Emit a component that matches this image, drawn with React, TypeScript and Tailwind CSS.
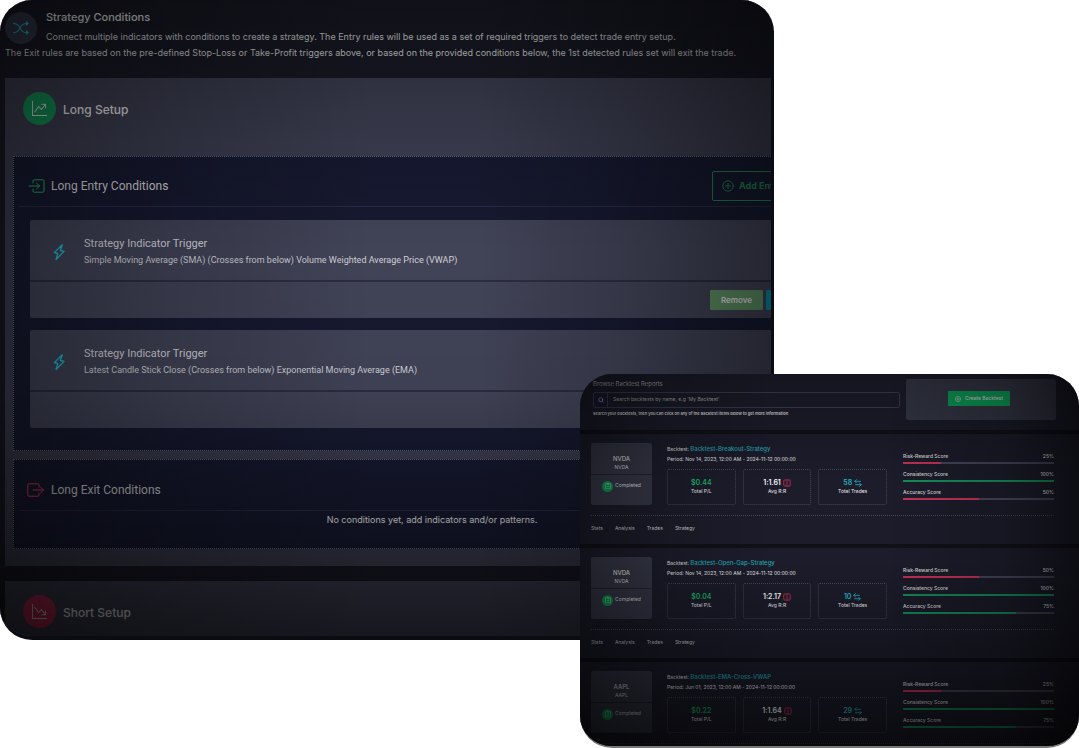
import React from 'react';
import { BsGraphUpArrow, BsGraphDownArrow, BsShuffle, BsClipboardCheck } from 'react-icons/bs';
import { Search } from 'lucide-react';

interface Trigger {
  text: string;
  editable: boolean;
}

interface Score {
  label: string;
  value: number;
}

interface Report {
  ticker: string;
  name: string;
  period: string;
  profit: string;
  ratio: string;
  trades: number;
  tabs: string[];
  scores: Score[];
}

const triggers: Trigger[] = [
  { text: 'Simple Moving Average (SMA) (Crosses from below) Volume Weighted Average Price (VWAP)', editable: true },
  { text: 'Latest Candle Stick Close (Crosses from below) Exponential Moving Average (EMA)', editable: false },
];

const tabs = ['Stats', 'Analysis', 'Trades', 'Strategy'];

const reports: Report[] = [
  {
    ticker: 'NVDA',
    name: 'Backtest-Breakout-Strategy',
    period: 'Nov 14, 2023, 12:00 AM - 2024-11-12 00:00:00',
    profit: '$0.44',
    ratio: '1:1.61',
    trades: 58,
    tabs,
    scores: [
      { label: 'Risk-Reward Score', value: 25 },
      { label: 'Consistency Score', value: 100 },
      { label: 'Accuracy Score', value: 50 },
    ],
  },
  {
    ticker: 'NVDA',
    name: 'Backtest-Open-Gap-Strategy',
    period: 'Nov 14, 2023, 12:00 AM - 2024-11-12 00:00:00',
    profit: '$0.04',
    ratio: '1:2.17',
    trades: 10,
    tabs,
    scores: [
      { label: 'Risk-Reward Score', value: 50 },
      { label: 'Consistency Score', value: 100 },
      { label: 'Accuracy Score', value: 75 },
    ],
  },
  {
    ticker: 'AAPL',
    name: 'Backtest-EMA-Cross-VWAP',
    period: 'Jun 01, 2023, 12:00 AM - 2024-11-12 00:00:00',
    profit: '$0.22',
    ratio: '1:1.64',
    trades: 29,
    tabs: [],
    scores: [
      { label: 'Risk-Reward Score', value: 25 },
      { label: 'Consistency Score', value: 100 },
      { label: 'Accuracy Score', value: 75 },
    ],
  },
];

const iconProps = {
  fill: 'none',
  stroke: 'currentColor',
  strokeLinecap: 'round' as const,
  strokeLinejoin: 'round' as const,
  'aria-hidden': true,
};

const EnterIcon = () => (
  <svg viewBox="0 0 18 14" className="h-[14px] w-[18px] text-[#2bb56c]" {...iconProps}>
    <path d="M5 4V2a1.2 1.2 0 0 1 1.2-1.2h8.6A1.2 1.2 0 0 1 16 2v10a1.2 1.2 0 0 1-1.2 1.2H6.2A1.2 1.2 0 0 1 5 12v-2M1 7h10.5M8.5 4l3 3-3 3" />
  </svg>
);

const ExitIcon = () => (
  <svg viewBox="0 0 18 14" className="h-[14px] w-[18px] text-[#f03a66]" {...iconProps}>
    <path d="M12 4V2A1.2 1.2 0 0 0 10.8.8H2A1.2 1.2 0 0 0 .8 2v10A1.2 1.2 0 0 0 2 13.2h8.8A1.2 1.2 0 0 0 12 12v-2M6 7h10.5M13.5 4l3 3-3 3" />
  </svg>
);

const BoltIcon = () => (
  <svg viewBox="0 0 12 18" className="mt-1 h-[18px] w-3 text-[#22c6dc]" strokeWidth="1.3" {...iconProps}>
    <path d="M9.3 1.8 1.2 9.6l3.6.9L3 16.5l8-8.1-3.6-.9z" />
  </svg>
);

const PlusCircle = ({ className }: { className: string }) => (
  <svg viewBox="0 0 12 12" className={className} {...iconProps}>
    <circle cx="6" cy="6" r="5.2" />
    <path d="M6 3.5v5M3.5 6h5" />
  </svg>
);

const RatioIcon = () => (
  <svg viewBox="0 0 8 8" className="size-2 text-[#d8325c]" strokeWidth="0.8" {...iconProps}>
    <path d="M3 1H1.6a.8.8 0 0 0-.8.8v4.4c0 .5.3.8.8.8H3M5 1h1.4c.5 0 .8.3.8.8v4.4c0 .5-.3.8-.8.8H5M4 .3v7.4" />
  </svg>
);

const TradesIcon = () => (
  <svg viewBox="0 0 8 8" className="size-2 text-[#22b3c6]" strokeWidth="0.8" {...iconProps}>
    <path d="M2.5.6.8 2.3 2.5 4M.8 2.3h5.7M5.5 4l1.7 1.7-1.7 1.7M7.2 5.7H1.5" />
  </svg>
);

const TriggerCard = ({ text, editable }: Trigger) => (
  <article className="rounded-[2px] bg-[#43455a]">
    <div className="flex h-[60px] items-center gap-[19px] pl-[23px]">
      <BoltIcon />
      <div className="pt-1 font-['Roboto','Inter',sans-serif]">
        <h4 className="text-[11px] leading-4 text-[#dcdce0]">Strategy Indicator Trigger</h4>
        <p className="text-[9px] leading-4 text-[#d8d8de]">{text}</p>
      </div>
    </div>
    <div className="flex h-[38px] items-center justify-end gap-[3px] border-t-2 border-[#2d2e42] pr-[26px]">
      {editable && (
        <>
          <button className="h-5 w-[53px] rounded-[1px] bg-[#649a6c] text-[8px] font-semibold text-[#eee]">Remove</button>
          <button aria-label="Edit" className="h-5 w-[53px] rounded-[1px] bg-[#0795ae]" />
        </>
      )}
    </div>
  </article>
);

const StrategyPanel = () => (
  <section className="relative col-span-2 col-start-1 row-start-1 self-start overflow-hidden rounded-[32px] border-r-[3px] border-b-4 border-[#0b0b12] bg-[#191a26] pl-[5px]">
    <header className="h-[78px] pt-[9px]">
      <div className="float-left mt-[3px] mr-[9px] flex size-8 items-center justify-center rounded-full bg-[#363a4e]">
        <BsShuffle className="size-4 text-[#28bfd3]" />
      </div>
      <h2 className="mb-1 text-[11px] leading-4 font-medium text-[#eee]">Strategy Conditions</h2>
      <p className="text-[9px] leading-4 whitespace-nowrap text-[#ddd]">
        Connect multiple indicators with conditions to create a strategy. The Entry rules will be used as a set of required triggers to detect trade entry setup.
        <br />
        The Exit rules are based on the pre-defined Stop-Loss or Take-Profit triggers above, or based on the provided conditions below, the 1st detected rules set will exit the trade.
      </p>
    </header>

    {/* Long setup */}
    <div className="-mr-20 bg-[#3e3f53] pb-[17px] pl-2">
      <div className="flex h-[78px] items-start gap-[7px] pt-[14px] pl-[10px]">
        <div className="flex size-[33px] items-center justify-center rounded-full bg-[#12965a]">
          <BsGraphUpArrow className="size-[15px] text-[#ddd]" />
        </div>
        <h3 className="text-[12px] leading-[35px] font-medium text-[#eee]">Long Setup</h3>
      </div>

      <div className="h-[295px] border border-dotted border-[#6a6c84] bg-[#171a32] px-[5px]">
        <div className="flex h-[50px] items-center border-b border-[#2b2d48] pt-[9px] pr-[2px] pl-[9px]">
          <EnterIcon />
          <h4 className="ml-[5px] font-['Roboto','Inter',sans-serif] text-[12px] text-[#ddd]">Long Entry Conditions</h4>
          <button className="ml-auto flex h-[30px] w-[131px] items-center gap-[5px] rounded-[2px] border border-[#1f8a58] pl-[9px] text-[9px] font-bold text-[#1f8a58]">
            <PlusCircle className="size-3" />
            Add Entry
          </button>
        </div>
        <div className="mt-[13px] ml-[11px] flex flex-col gap-3">
          {triggers.map((trigger) => (
            <TriggerCard key={trigger.text} {...trigger} />
          ))}
        </div>
      </div>

      <div className="mt-2 h-[90px] border border-dotted border-[#6a6c84] bg-[#171a32] px-[5px]">
        <div className="flex h-[51px] items-center border-b border-[#2b2d48] pt-[9px] pl-2">
          <ExitIcon />
          <h4 className="ml-[6px] font-['Roboto','Inter',sans-serif] text-[12px] text-[#ddd]">Long Exit Conditions</h4>
        </div>
        <p className="text-center text-[9px] leading-[18px] text-[#f4f4f4]">No conditions yet, add indicators and/or patterns.</p>
      </div>
    </div>

    {/* Short setup */}
    <div className="mt-[15px] -mr-20 h-[55px] bg-[#3e3f53] pl-2">
      <div className="flex items-start gap-[7px] pt-[14px] pl-[10px]">
        <div className="flex size-[33px] items-center justify-center rounded-full bg-[#c22a54]">
          <BsGraphDownArrow className="size-[15px] text-[#ddd]" />
        </div>
        <h3 className="text-[12px] leading-[35px] font-medium text-[#eee]">Short Setup</h3>
      </div>
    </div>

    {/* Vignette */}
    <div className="pointer-events-none absolute inset-0 bg-[linear-gradient(to_right,rgb(0_0_0/0.4),rgb(0_0_0/0.2)_22%,rgb(0_0_0/0.03)_48%,rgb(0_0_0/0.03)_62%,rgb(0_0_0/0.2)_80%,rgb(0_0_0/0.45)),linear-gradient(to_bottom,rgb(0_0_0/0.35),rgb(0_0_0/0.1)_22%,transparent_40%,rgb(0_0_0/0.05)_62%,rgb(0_0_0/0.32)_82%,rgb(0_0_0/0.62))]" />
  </section>
);

const ScoreBar = ({ label, value }: Score) => (
  <div>
    <div className="flex justify-between text-[5px] leading-[9px] font-medium text-[#ddd]">
      <span>{label}</span>
      <span>{value}%</span>
    </div>
    <div className="mt-px h-[2px] bg-[#45475c]">
      <div className={value > 50 ? 'h-full bg-[#15905a]' : 'h-full bg-[#c83156]'} style={{ width: `${value}%` }} />
    </div>
  </div>
);

const statBox = 'flex h-[36px] flex-1 flex-col items-center justify-center rounded-[2px] border border-dotted border-[#45475a]';

const ReportCard = ({ report }: { report: Report }) => (
  <article className="h-[114px] overflow-hidden border-t-4 border-[#101018] pt-[9px] pr-[25px] pl-[11px]">
    <div className="flex">
      <div className="h-[62px] w-[61px] shrink-0 rounded-[2px] bg-[#363848] text-center">
        <div className="h-8 border-b border-[#22232f] pt-[11px] text-[#ddd]">
          <h3 className="text-[6px] leading-[9px] font-medium">{report.ticker}</h3>
          <p className="text-[5px] leading-[9px]">{report.ticker}</p>
        </div>
        <div className="flex h-[22px] items-center justify-center gap-[2px] text-[5px] text-[#ddd]">
          <span className="flex size-[11px] items-center justify-center rounded-full bg-[#0f9a55]">
            <BsClipboardCheck className="size-[6px]" />
          </span>
          Completed
        </div>
      </div>
      <div className="ml-[15px] w-[220px] shrink-0">
        <p className="text-[5px] leading-[11px] text-[#ddd]">
          Backtest: <a href="#report" className="text-[6px] font-medium text-[#23a5b3]">{report.name}</a>
        </p>
        <p className="text-[5px] leading-[9px] text-[#e6e6ea]">Period: {report.period}</p>
        <div className="mt-[5px] flex gap-[7px]">
          <div className={statBox}>
            <strong className="text-[7px] leading-[9px] font-semibold text-[#17b565]">{report.profit}</strong>
            <span className="text-[5px] leading-[9px] text-[#eee]">Total P/L</span>
          </div>
          <div className={statBox}>
            <strong className="flex items-center gap-[2px] text-[7px] leading-[9px] font-semibold text-white">
              {report.ratio} <RatioIcon />
            </strong>
            <span className="text-[5px] leading-[9px] text-[#eee]">Avg R:R</span>
          </div>
          <div className={statBox}>
            <strong className="flex items-center gap-[2px] text-[7px] leading-[9px] font-semibold text-[#25b5c4]">
              {report.trades} <TradesIcon />
            </strong>
            <span className="text-[5px] leading-[9px] text-[#eee]">Total Trades</span>
          </div>
        </div>
      </div>
      <div className="ml-4 flex flex-1 flex-col gap-[6px] pt-[9px]">
        {report.scores.map((score) => (
          <ScoreBar key={score.label} {...score} />
        ))}
      </div>
    </div>
    <nav className="mt-[10px] flex gap-3 border-t border-dotted border-[#45475a] pt-2 text-[5px] leading-[9px] text-[#ccc]">
      {report.tabs.map((tab) => (
        <a key={tab} href="#tab">{tab}</a>
      ))}
    </nav>
  </article>
);

const ReportsPanel = () => (
  <section className="relative col-span-2 col-start-2 row-start-1 mt-[374px] h-[374px] overflow-hidden rounded-[32px] border-b-2 border-[#777] bg-[#1c1c2b]">
    <header className="flex h-14 items-start pr-[23px] pl-[13px]">
      <div className="flex-1 pt-[5px]">
        <label htmlFor="search" className="block text-[6px] leading-[9px] font-light text-[#ccc]">Browse Backtest Reports</label>
        <div className="mt-1 flex h-4 rounded-[2px] border border-[#3b3c50]">
          <span className="flex w-[14px] items-center justify-center border-r border-[#3b3c50] bg-[#171a38]">
            <Search className="size-[6px] text-[#ddd]" />
          </span>
          <input
            id="search"
            type="text"
            placeholder="Search backtests by name, e.g 'My Backtest'"
            className="min-w-0 flex-1 bg-transparent pl-[5px] text-[5px] outline-none placeholder:text-[#aaa]"
          />
        </div>
        <p className="mt-px text-[4px] leading-[9px] font-semibold text-[#ddd]">
          Search your backtests, then you can click on any of the Backtest items below to get more information
        </p>
      </div>
      <div className="mt-[5px] ml-[6px] flex h-[41px] w-[150px] items-start justify-center rounded-[2px] bg-[#363848] pt-3 pr-1">
        <button className="flex h-[15px] w-[62px] items-center justify-center gap-1 bg-[#0da55c] text-[5px] font-medium text-[#ddd]">
          <PlusCircle className="size-[6px]" />
          Create Backtest
        </button>
      </div>
    </header>

    {reports.map((report) => (
      <ReportCard key={report.name} report={report} />
    ))}

    {/* Vignette */}
    <div className="pointer-events-none absolute inset-0 bg-[linear-gradient(to_right,rgb(0_0_0/0.4),rgb(0_0_0/0.15)_18%,transparent_40%,transparent_60%,rgb(0_0_0/0.2)_85%,rgb(0_0_0/0.55)),linear-gradient(to_bottom,rgb(0_0_0/0.25),transparent_30%,transparent_50%,rgb(0_0_0/0.35)_80%,rgb(0_0_0/0.65))]" />
  </section>
);

const App: React.FC = () => {
  return (
    <main className="grid grid-cols-[580fr_194fr_305fr] bg-white font-['Inter',sans-serif]">
      <StrategyPanel />
      <ReportsPanel />
    </main>
  );
};

export default App;
